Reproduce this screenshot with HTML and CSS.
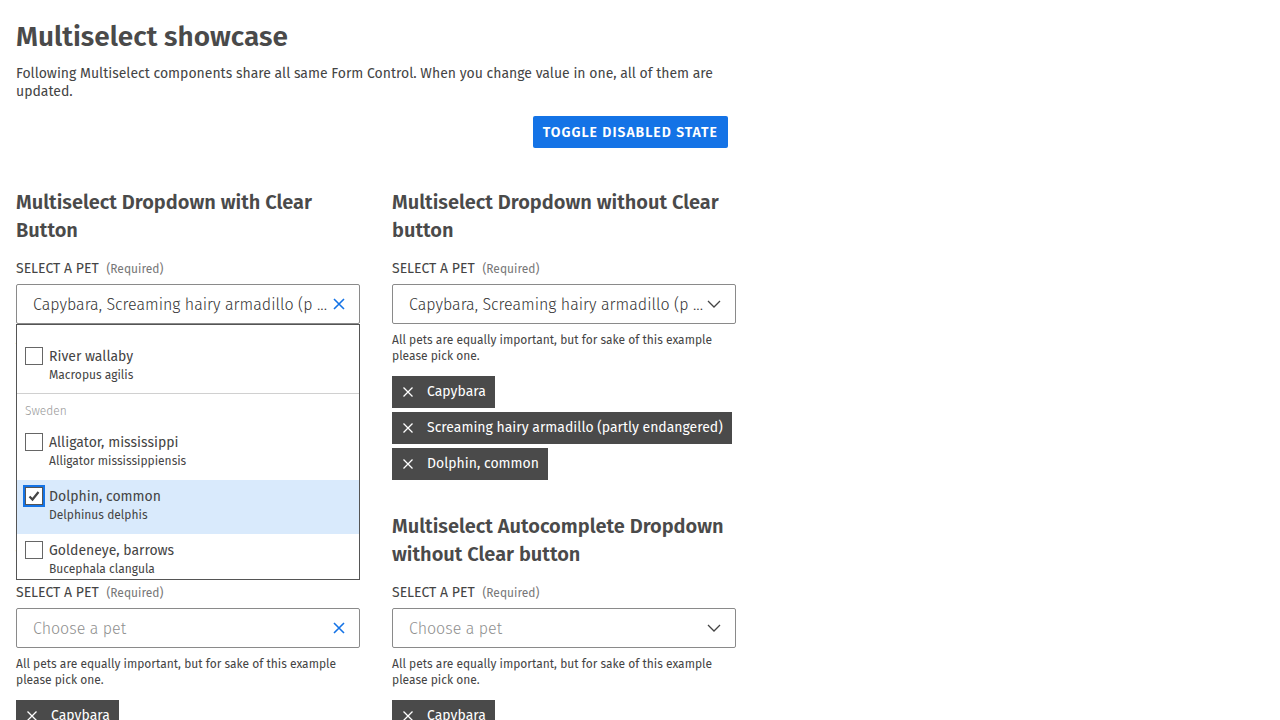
FILE: index.html
```html
<!DOCTYPE html>
<html lang="en">
<head>
<meta charset="utf-8">
<title>Multiselect showcase</title>
<link rel="stylesheet" href="styles.css">
</head>
<body>
<main class="page">
  <h1 class="title">Multiselect showcase</h1>
  <p class="intro">Following Multiselect components share all same Form Control. When you change value in one, all of them are updated.</p>
  <div class="toolbar">
    <button class="btn-primary" type="button">Toggle disabled state</button>
  </div>

  <div class="columns">
    <div class="column">
      <section class="demo">
        <h2 class="demo-title">Multiselect Dropdown with Clear Button</h2>
        <div class="field">
          <div class="label">Select a pet <span class="req">(Required)</span></div>
          <div class="control-wrap">
            <div class="control is-open">
              <span class="value">Capybara, Screaming hairy armadillo (p ...</span>
              <svg class="icon-clear" viewBox="0 0 12 12" width="12" height="12"><path d="M1 1 L11 11 M11 1 L1 11" stroke="currentColor" stroke-width="1.6" fill="none"/></svg>
            </div>
            <div class="panel">
              <ul class="options">
                <li class="option">
                  <span class="checkbox"></span>
                  <span class="opt-text"><span class="opt-title">River wallaby</span><span class="opt-sub">Macropus agilis</span></span>
                </li>
              </ul>
              <div class="group-label">Sweden</div>
              <ul class="options">
                <li class="option">
                  <span class="checkbox"></span>
                  <span class="opt-text"><span class="opt-title">Alligator, mississippi</span><span class="opt-sub">Alligator mississippiensis</span></span>
                </li>
                <li class="option is-active">
                  <span class="checkbox is-checked is-focus"><svg viewBox="0 0 14 14" width="14" height="14"><path d="M2.5 7.5 L5.5 10.5 L11.5 3" stroke="#444" stroke-width="2.2" fill="none"/></svg></span>
                  <span class="opt-text"><span class="opt-title">Dolphin, common</span><span class="opt-sub">Delphinus delphis</span></span>
                </li>
                <li class="option">
                  <span class="checkbox"></span>
                  <span class="opt-text"><span class="opt-title">Goldeneye, barrows</span><span class="opt-sub">Bucephala clangula</span></span>
                </li>
              </ul>
            </div>
          </div>
          <p class="help">All pets are equally important, but for sake of this example please pick one.</p>
          <div class="tags">
            <span class="tag"><svg class="tag-x" viewBox="0 0 10 10" width="10" height="10"><path d="M0.5 0.5 L9.5 9.5 M9.5 0.5 L0.5 9.5" stroke="currentColor" stroke-width="1.3" fill="none"/></svg>Capybara</span>
            <span class="tag"><svg class="tag-x" viewBox="0 0 10 10" width="10" height="10"><path d="M0.5 0.5 L9.5 9.5 M9.5 0.5 L0.5 9.5" stroke="currentColor" stroke-width="1.3" fill="none"/></svg>Screaming hairy armadillo (partly endangered)</span>
            <span class="tag"><svg class="tag-x" viewBox="0 0 10 10" width="10" height="10"><path d="M0.5 0.5 L9.5 9.5 M9.5 0.5 L0.5 9.5" stroke="currentColor" stroke-width="1.3" fill="none"/></svg>Dolphin, common</span>
          </div>
        </div>
      </section>

      <section class="demo">
        <h2 class="demo-title">Multiselect Autocomplete Dropdown with Clear button</h2>
        <div class="field">
          <div class="label">Select a pet <span class="req">(Required)</span></div>
          <div class="control">
            <span class="placeholder">Choose a pet</span>
            <svg class="icon-clear" viewBox="0 0 12 12" width="12" height="12"><path d="M1 1 L11 11 M11 1 L1 11" stroke="currentColor" stroke-width="1.6" fill="none"/></svg>
          </div>
          <p class="help">All pets are equally important, but for sake of this example please pick one.</p>
          <div class="tags">
            <span class="tag"><svg class="tag-x" viewBox="0 0 10 10" width="10" height="10"><path d="M0.5 0.5 L9.5 9.5 M9.5 0.5 L0.5 9.5" stroke="currentColor" stroke-width="1.3" fill="none"/></svg>Capybara</span>
          </div>
        </div>
      </section>
    </div>

    <div class="column">
      <section class="demo">
        <h2 class="demo-title">Multiselect Dropdown without Clear button</h2>
        <div class="field">
          <div class="label">Select a pet <span class="req">(Required)</span></div>
          <div class="control">
            <span class="value">Capybara, Screaming hairy armadillo (p ...</span>
            <svg class="icon-chevron" viewBox="0 0 14 8" width="14" height="8"><path d="M1 1 L7 7 L13 1" stroke="currentColor" stroke-width="1.3" fill="none"/></svg>
          </div>
          <p class="help">All pets are equally important, but for sake of this example please pick one.</p>
          <div class="tags">
            <span class="tag"><svg class="tag-x" viewBox="0 0 10 10" width="10" height="10"><path d="M0.5 0.5 L9.5 9.5 M9.5 0.5 L0.5 9.5" stroke="currentColor" stroke-width="1.3" fill="none"/></svg>Capybara</span>
            <span class="tag"><svg class="tag-x" viewBox="0 0 10 10" width="10" height="10"><path d="M0.5 0.5 L9.5 9.5 M9.5 0.5 L0.5 9.5" stroke="currentColor" stroke-width="1.3" fill="none"/></svg>Screaming hairy armadillo (partly endangered)</span>
            <span class="tag"><svg class="tag-x" viewBox="0 0 10 10" width="10" height="10"><path d="M0.5 0.5 L9.5 9.5 M9.5 0.5 L0.5 9.5" stroke="currentColor" stroke-width="1.3" fill="none"/></svg>Dolphin, common</span>
          </div>
        </div>
      </section>

      <section class="demo">
        <h2 class="demo-title">Multiselect Autocomplete Dropdown without Clear button</h2>
        <div class="field">
          <div class="label">Select a pet <span class="req">(Required)</span></div>
          <div class="control">
            <span class="placeholder">Choose a pet</span>
            <svg class="icon-chevron" viewBox="0 0 14 8" width="14" height="8"><path d="M1 1 L7 7 L13 1" stroke="currentColor" stroke-width="1.3" fill="none"/></svg>
          </div>
          <p class="help">All pets are equally important, but for sake of this example please pick one.</p>
          <div class="tags">
            <span class="tag"><svg class="tag-x" viewBox="0 0 10 10" width="10" height="10"><path d="M0.5 0.5 L9.5 9.5 M9.5 0.5 L0.5 9.5" stroke="currentColor" stroke-width="1.3" fill="none"/></svg>Capybara</span>
          </div>
        </div>
      </section>
    </div>
  </div>
</main>
</body>
</html>
```

FILE: styles.css
```css
* { box-sizing: border-box; }

html, body {
  margin: 0;
  background: #fff;
}

body {
  font-family: "Fira Sans", Roboto, "Liberation Sans", sans-serif;
  color: #444;
}

.page {
  width: 752px;
  padding: 16px;
}

.title {
  margin: 1px 0 0;
  font-size: 28px;
  line-height: 40px;
  font-weight: 600;
  color: #4a4a4a;
}

.intro {
  margin: 8px 0 0;
  font-size: 14px;
  line-height: 18px;
  color: #444;
}

.toolbar {
  display: flex;
  justify-content: flex-end;
  margin-top: 15px;
  padding-right: 8px;
}

.btn-primary {
  height: 32px;
  padding: 0 10px;
  border: 0;
  border-radius: 2px;
  background: #1473e6;
  color: #fff;
  font-family: inherit;
  font-size: 14px;
  font-weight: 600;
  letter-spacing: 1px;
  text-transform: uppercase;
}

.columns {
  display: grid;
  grid-template-columns: 344px 344px;
  column-gap: 32px;
  margin-top: 40px;
}

.demo + .demo {
  margin-top: 32px;
}

.demo-title {
  margin: 0;
  font-size: 20px;
  line-height: 28px;
  font-weight: 600;
  color: #4a4a4a;
}

.field {
  margin-top: 16px;
}

.label {
  padding-top: 1px;
  font-size: 14px;
  line-height: 16px;
  text-transform: uppercase;
  color: #444;
}

.req {
  margin-left: 4px;
  font-size: 12px;
  text-transform: none;
  color: #777;
}

.control-wrap {
  position: relative;
}

.control {
  margin-top: 7px;
  height: 40px;
  display: flex;
  align-items: center;
  justify-content: space-between;
  padding: 0 14px 0 16px;
  border: 1px solid #8a8a8a;
  border-radius: 2px;
  background: #fff;
  font-size: 16px;
  font-weight: 300;
}

.value {
  color: #333;
  white-space: nowrap;
  overflow: hidden;
}

.placeholder {
  color: #8f8f8f;
}

.icon-clear {
  flex: none;
  color: #1473e6;
}

.icon-chevron {
  flex: none;
  color: #444;
}

.panel {
  position: absolute;
  left: 0;
  right: 0;
  top: 40px;
  height: 256px;
  overflow: hidden;
  z-index: 10;
  background: #fff;
  border: 1px solid #555;
  padding-top: 15px;
}

.options {
  list-style: none;
  margin: 0;
  padding: 0;
}

.options + .group-label {
  border-top: 1px solid #d0d0d0;
}

.option {
  display: flex;
  align-items: flex-start;
  height: 54px;
  padding: 7px 8px 0;
}

.options:first-child .option {
  height: 53px;
}

.option.is-active {
  background: #d9eafc;
}

.checkbox {
  flex: none;
  width: 18px;
  height: 18px;
  border: 1px solid #666;
  background: #fff;
  display: flex;
  align-items: center;
  justify-content: center;
}

.checkbox.is-focus {
  outline: 2px solid #1473e6;
  outline-offset: 0;
  border-color: #555;
}

.opt-text {
  display: flex;
  flex-direction: column;
  margin-left: 6px;
  padding-top: 1px;
}

.opt-title {
  font-size: 14px;
  line-height: 18px;
  color: #444;
}

.opt-sub {
  font-size: 12px;
  line-height: 18px;
  color: #444;
}

.group-label {
  padding: 9px 8px 7px;
  font-size: 12px;
  line-height: 16px;
  font-weight: 300;
  color: #999;
}

.help {
  margin: 8px 0 0;
  font-size: 12px;
  line-height: 16px;
  color: #444;
}

.tags {
  margin-top: 12px;
  display: flex;
  flex-direction: column;
  align-items: flex-start;
  gap: 4px;
}

.tag {
  display: inline-flex;
  align-items: center;
  height: 32px;
  padding: 0 9px 1px 11px;
  background: #4a4a4a;
  color: #fff;
  font-size: 14px;
}

.tag-x {
  flex: none;
  margin-right: 14px;
  margin-top: 1px;
  color: #fff;
}
```
